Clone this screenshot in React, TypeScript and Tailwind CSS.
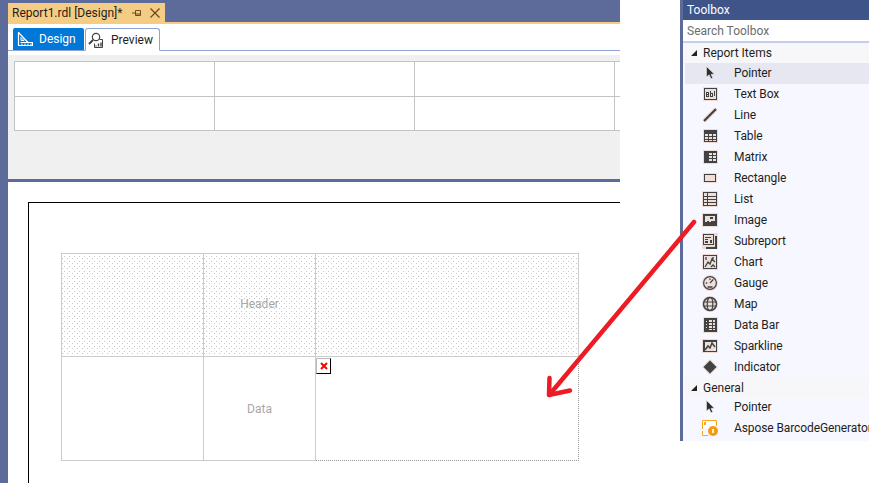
import type { ReactNode } from "react";

const INK = "#424242";
const HALO = "#eedbd4";
const PALE = "#ecdfdc";

const Glyph = ({ children }: { children: ReactNode }) => (
  <svg width="16" height="16" viewBox="0 0 16 16" shapeRendering="crispEdges" className="shrink-0">
    {children}
  </svg>
);

// pale pink fringe the toolbox glyphs carry around their edge
const Halo = ({ x, y, w, h }: { x: number; y: number; w: number; h: number }) => (
  <rect x={x - 1} y={y - 1} width={w + 2} height={h + 2} fill={HALO} />
);

const PointerIcon = () => (
  <svg width="16" height="16" viewBox="0 0 16 16" className="shrink-0">
    <path d="M4.5 1.5 L4.5 12 L7.2 9.8 L9 13.8 L10.8 13 L9 9.4 L12.2 9 Z" fill="#2f2f2f" stroke="#e9e4e4" strokeWidth="0.6" />
  </svg>
);

const icons: Record<string, ReactNode> = {
  "Text Box": (
    <Glyph>
      <Halo x={2} y={2} w={13} h={12} />
      <rect x="2.5" y="2.5" width="12" height="11" fill={PALE} stroke={INK} />
      <path d="M4 6h2v4H4zM4 8h2M8 5v5h2V7H8M12 5v5" fill="none" stroke={INK} />
    </Glyph>
  ),
  Line: (
    <svg width="16" height="16" viewBox="0 0 16 16" className="shrink-0">
      <path d="M2 14 L14 2" stroke={HALO} strokeWidth="4.4" />
      <path d="M2 14 L14 2" stroke={INK} strokeWidth="2.2" />
    </svg>
  ),
  Table: (
    <Glyph>
      <Halo x={2} y={2} w={13} h={12} />
      <rect x="2" y="2" width="13" height="12" fill={INK} />
      <path d="M3 6h3v2H3zM7 6h3v2H7zM11 6h3v2h-3zM3 9h3v2H3zM7 9h3v2H7zM11 9h3v2h-3zM3 12h3v1H3zM7 12h3v1H7zM11 12h3v1h-3z" fill={PALE} />
    </Glyph>
  ),
  Matrix: (
    <Glyph>
      <Halo x={2} y={2} w={13} h={12} />
      <rect x="2" y="2" width="13" height="12" fill={INK} />
      <path d="M7 4h3v2H7zM11 4h3v2h-3zM7 7h3v2H7zM11 7h3v2h-3zM7 10h3v2H7zM11 10h3v2h-3z" fill={PALE} />
    </Glyph>
  ),
  Rectangle: (
    <Glyph>
      <Halo x={2} y={4} w={12} h={8} />
      <rect x="2.5" y="4.5" width="11" height="7" fill={PALE} stroke={INK} />
    </Glyph>
  ),
  List: (
    <Glyph>
      <Halo x={1} y={1} w={14} h={14} />
      <rect x="1.5" y="1.5" width="13" height="13" fill={PALE} stroke={INK} strokeWidth="1" />
      <path d="M1 5.5h14M1 8.5h14M1 11.5h14M5.5 2v12" stroke={INK} fill="none" />
    </Glyph>
  ),
  Image: (
    <Glyph>
      <Halo x={1} y={2} w={14} h={12} />
      <rect x="1" y="2" width="14" height="12" fill={INK} />
      <rect x="3" y="4" width="10" height="8" fill={PALE} />
      <path d="M3 10h2V9h2v1h2V9h4v3H3z" fill={INK} />
      <rect x="8" y="5" width="3" height="2" fill={INK} />
    </Glyph>
  ),
  Subreport: (
    <Glyph>
      <Halo x={1} y={1} w={14} h={14} />
      <rect x="1.5" y="1.5" width="10" height="10" fill={PALE} stroke={INK} />
      <path d="M3 4h6v1H3zM3 6h3v1H3zM3 8h3v2H3zM8 7h2v3H8z" fill={INK} />
      <path d="M13.5 3v11.5H4" fill="none" stroke={INK} strokeWidth="2" />
    </Glyph>
  ),
  Chart: (
    <Glyph>
      <Halo x={1} y={1} w={14} h={14} />
      <rect x="1.5" y="1.5" width="13" height="13" fill={PALE} stroke={INK} />
      <path d="M3 13l3-5 2 2 2-5 3 3M9 13l2-2 2 2M4 3v3M11 3v2" fill="none" stroke={INK} strokeWidth="1.3" shapeRendering="auto" />
    </Glyph>
  ),
  Gauge: (
    <svg width="16" height="16" viewBox="0 0 16 16" className="shrink-0">
      <circle cx="8" cy="8" r="8" fill={HALO} />
      <circle cx="8" cy="8" r="6.4" fill={PALE} stroke={INK} strokeWidth="1.2" />
      <path d="M8 8l3.4-3.6M3.8 8h1.4M8 3.6V5M5.5 12h5" stroke={INK} strokeWidth="1.3" fill="none" />
    </svg>
  ),
  Map: (
    <svg width="16" height="16" viewBox="0 0 16 16" className="shrink-0">
      <circle cx="8" cy="8" r="8" fill={HALO} />
      <circle cx="8" cy="8" r="6.5" fill={PALE} stroke={INK} strokeWidth="1.5" />
      <ellipse cx="8" cy="8" rx="2.8" ry="6.5" fill="none" stroke={INK} strokeWidth="1.2" />
      <path d="M2 6h12M2 10h12" stroke={INK} strokeWidth="1.2" fill="none" />
    </svg>
  ),
  "Data Bar": (
    <Glyph>
      <Halo x={2} y={1} w={13} h={14} />
      <rect x="2" y="1" width="13" height="14" fill={INK} />
      <path d="M7 3h3v2H7zM11 3h2v2h-2zM7 6h3v2H7zM11 6h2v2h-2zM7 9h3v2H7zM11 9h2v2h-2zM7 12h3v1H7zM11 12h2v1h-2zM4 4h1v1H4zM4 7h1v1H4zM4 10h1v1H4z" fill={PALE} />
    </Glyph>
  ),
  Sparkline: (
    <Glyph>
      <Halo x={1} y={2} w={14} h={12} />
      <rect x="1" y="2" width="14" height="12" fill={INK} />
      <rect x="2.5" y="3.5" width="11" height="9" fill={PALE} />
      <path d="M3 12l3-4 2 2 2-5 3 4" fill="none" stroke={INK} strokeWidth="1.5" shapeRendering="auto" />
    </Glyph>
  ),
  Indicator: (
    <svg width="16" height="16" viewBox="0 0 16 16" className="shrink-0">
      <path d="M8 0l8 8-8 8-8-8z" fill={HALO} />
      <path d="M8 1.5L14.5 8 8 14.5 1.5 8z" fill={INK} />
    </svg>
  ),
  Aspose: (
    <svg width="16" height="16" viewBox="0 0 16 16" className="shrink-0">
      <path d="M.5 9V.5h14V6M.5 11v4.5H6" fill="#fff" stroke="#f5a623" />
      <rect x="2" y="2" width="2" height="3" fill="#f5a623" />
      <circle cx="11" cy="11" r="5" fill="#f39c12" />
      <rect x="10" y="9" width="2" height="4" fill="#fff3d6" />
    </svg>
  ),
};

const reportItems = [
  "Text Box",
  "Line",
  "Table",
  "Matrix",
  "Rectangle",
  "List",
  "Image",
  "Subreport",
  "Chart",
  "Gauge",
  "Map",
  "Data Bar",
  "Sparkline",
  "Indicator",
];

const ToolRow = ({ icon, label, active }: { icon: ReactNode; label: string; active?: boolean }) => (
  <div className={`h-[21px] flex items-center pl-[17px] pb-[2px] whitespace-nowrap ${active ? "bg-[#e6e7f0]" : ""}`}>
    <span className="w-[32px] shrink-0 flex">{icon}</span>
    <span className="tracking-[-0.1px]">{label}</span>
  </div>
);

const GroupRow = ({ label, h }: { label: string; h: string }) => (
  <div className={`${h} flex items-center bg-[#f7f7fa] pl-[6px]`}>
    <span className="w-0 h-0 mr-[6px] border-l-[6px] border-l-transparent border-b-[6px] border-b-[#222]" />
    <span>{label}</span>
  </div>
);

const Toolbox = () => (
  <div className="w-[189px] h-[441px] shrink-0 flex bg-[#f7f8ff] text-[12px] text-[#1e1e1e] overflow-hidden">
    <div className="w-[3px] bg-[#5c6b9a] shrink-0" />
    <div className="flex-1 min-w-0 flex flex-col">
      <div className="h-[20px] shrink-0 bg-[#3f5589] text-white pl-[4px] leading-[20px]">Toolbox</div>
      <div className="h-[23px] shrink-0 bg-white border-b-2 border-[#c3cfe8] pl-[4px] leading-[22px] text-[#6d6d6d]">Search Toolbox</div>
      <div className="pl-[2px] flex flex-col">
        <GroupRow label="Report Items" h="h-[20px]" />
        <ToolRow icon={<PointerIcon />} label="Pointer" active />
        {reportItems.map((name) => (
          <ToolRow key={name} icon={icons[name]} label={name} />
        ))}
        <GroupRow label="General" h="h-[19px]" />
        <ToolRow icon={<PointerIcon />} label="Pointer" />
        <ToolRow icon={icons.Aspose} label="Aspose BarcodeGenerator" />
      </div>
    </div>
  </div>
);

const TabStrip = () => (
  <div className="h-[27px] shrink-0 bg-white border-b border-[#8ea4d2] flex items-end pl-[5px] text-[12px]">
    <div className="w-[71px] h-[22px] bg-[#0078d7] text-white flex items-center pl-[4px] gap-[6px] rounded-t-[2px]">
      <svg width="16" height="16" viewBox="0 0 16 16" fill="none" stroke="#fff" className="shrink-0">
        <path d="M1.5 1v13.5h14V11.5H3.5" strokeWidth="1.2" />
        <path d="M1.5 1.5L11 11.5" strokeWidth="1.2" />
        <path d="M4 6.5v3h3z" />
        <path d="M5 14v-1.5M8 14v-1.5M11 14v-1.5M14 14v-1.5" />
      </svg>
      <span>Design</span>
    </div>
    <div className="ml-px w-[75px] h-[23px] -mb-px bg-white border border-b-white border-[#8ea4d2] rounded-t-[3px] flex items-center pl-[2px] gap-[7px] text-[#1e1e1e]">
      <svg width="16" height="16" viewBox="0 0 16 16" fill="none" stroke="#424242" className="shrink-0">
        <circle cx="8" cy="5" r="3.7" strokeWidth="1.2" />
        <path d="M5 8L1 12" strokeWidth="2" />
        <path d="M11.5 7.5h3v8h-8v-4" />
        <path d="M8 14.5v-1M10.5 14.5v-3M13 14.5v-4" strokeWidth="1.4" />
      </svg>
      <span>Preview</span>
    </div>
  </div>
);

const TitleBar = () => (
  <div className="h-[24px] shrink-0 bg-[#5c6b9a] pt-[3px] border-b-2 border-[#f5cc84]">
    <div className="w-[157px] h-[19px] bg-[#f5cc84] flex items-center pl-[4px] text-[12px] text-[#1e1e1e] whitespace-nowrap">
      <span className="w-[120px] shrink-0">Report1.rdl [Design]*</span>
      <svg width="10" height="10" viewBox="0 0 10 10" fill="none" stroke="#6b4a1e" className="shrink-0">
        <path d="M0 5h3M3.5 2.5v5M3.5 2.5h5v5h-5M3.5 6h5" />
      </svg>
      <svg width="10" height="10" viewBox="0 0 10 10" fill="none" stroke="#6b4a1e" strokeWidth="1.3" className="ml-[8px] shrink-0">
        <path d="M0.5 0.5l9 9M9.5 0.5l-9 9" />
      </svg>
    </div>
  </div>
);

const PreviewGrid = () => (
  <div className="h-[124px] shrink-0 bg-[#f0f0f0] pt-[6px] pl-[6px] overflow-hidden">
    <div className="w-[620px] grid grid-cols-[201px_200px_200px_19px] border-t border-[#c4c4c4] bg-white">
      {Array.from({ length: 8 }).map((_, i) => (
        <div
          key={i}
          className={`${i < 4 ? "h-[35px]" : "h-[34px]"} border-r border-b border-[#c4c4c4] ${i % 4 === 0 ? "border-l" : ""}`}
        />
      ))}
    </div>
  </div>
);

const dots =
  "bg-[radial-gradient(circle_at_0.5px_0.5px,#c8c8c8_0.6px,transparent_0.6px),radial-gradient(circle_at_0.5px_0.5px,#c8c8c8_0.6px,transparent_0.6px)] bg-[length:5px_5px] bg-[position:2px_2px,5px_4px]";

const ReportTable = () => (
  <div className="w-[518px] grid grid-cols-[142px_113px_263px] grid-rows-[103px_104px] text-[12px] text-[#a8a8a8] border-t border-[#cccccc]">
    <div className={`border-l border-b border-[#cccccc] ${dots}`} />
    <div className={`border-l border-r border-b border-[#cccccc] pb-[2px] flex items-center justify-center ${dots}`}>Header</div>
    <div className={`border-r border-b border-[#cccccc] ${dots}`} />
    <div className="border-l border-b border-[#cccccc]" />
    <div className="border-l border-r border-b border-[#cccccc] flex items-center justify-center">Data</div>
    {/* selected cell: dotted edge on the two sides it owns */}
    <div className="border-r border-b border-dotted border-[#999999] pt-[1px]">
      <div className="w-[15px] h-[16px] bg-white border border-[#bbb] border-r-black border-b-black flex items-center justify-center">
        <svg width="8" height="8" viewBox="0 0 8 8" stroke="#f00" strokeWidth="2">
          <path d="M1 1l6 6M7 1l-6 6" />
        </svg>
      </div>
    </div>
  </div>
);

export default function App() {
  return (
    <div className="relative w-[869px] h-[483px] bg-white flex items-start overflow-hidden font-['Roboto',sans-serif]">
      <div className="w-[620px] h-[483px] shrink-0 flex overflow-hidden">
        <div className="w-[8px] shrink-0 bg-[#5c6b9a]" />
        <div className="flex-1 min-w-0 flex flex-col">
          <TitleBar />
          <TabStrip />
          <div className="h-[4px] shrink-0 bg-white" />
          <PreviewGrid />
          <div className="h-[3px] shrink-0 bg-[#5c6b9a]" />
          <div className="flex-1 min-h-0 overflow-hidden bg-white pt-[20px] pl-[20px]">
            <div className="w-[700px] h-[400px] border-t border-l border-black pt-[50px] pl-[32px]">
              <ReportTable />
            </div>
          </div>
        </div>
      </div>
      <div className="w-[60px] shrink-0" />
      <Toolbox />
      {/* red arrow scribbled over the screenshot */}
      <svg width="869" height="483" className="absolute inset-0 pointer-events-none" fill="none" stroke="#ed1c24" strokeWidth="4.5" strokeLinecap="round" strokeLinejoin="round">
        <path d="M694 222L550 394" />
        <path d="M549.5 378L549 395L570 390.5" />
      </svg>
    </div>
  );
}
